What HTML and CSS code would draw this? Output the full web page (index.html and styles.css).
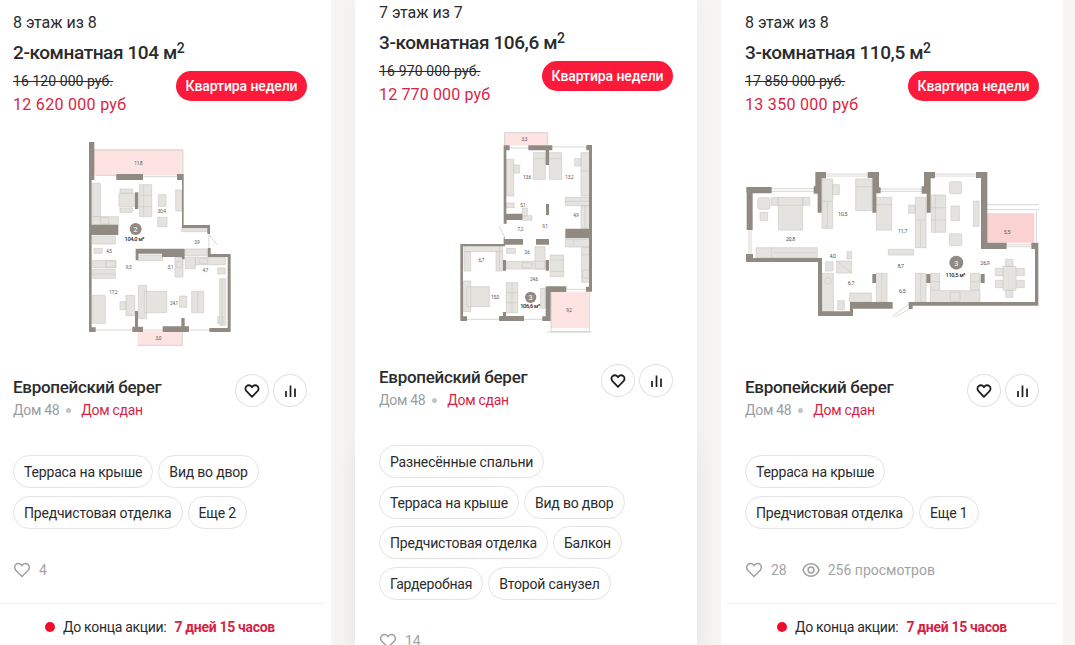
FILE: index.html
```html
<!DOCTYPE html>
<html lang="ru">
<head>
  <meta charset="UTF-8">
  <meta name="viewport" content="width=device-width, initial-scale=1.0">
  <title>Европейский берег — квартиры недели</title>
  <link rel="stylesheet" href="styles.css">
</head>
<body>
  <svg class="sprite" width="0" height="0">
    <symbol id="heart" viewBox="0 0 18 18">
      <path d="M9 15.5 L2.8 9.2 C1.2 7.5 1.3 4.9 2.9 3.5 C4.5 2.1 7 2.2 8.3 3.8 L9 4.6 L9.7 3.8 C11 2.2 13.5 2.1 15.1 3.5 C16.7 4.9 16.8 7.5 15.2 9.2 Z"/>
    </symbol>
    <symbol id="bars" viewBox="0 0 18 18">
      <path d="M5 9v6M9.500 3.500V15M14 6.500V15"/>
    </symbol>
    <symbol id="eye" viewBox="0 0 18 18">
      <path d="M1 9C2.5 4.800 5.500 2.800 9 2.800S15.500 4.800 17 9C15.500 13.200 12.500 15.200 9 15.200S2.500 13.200 1 9Z"/>
      <circle cx="9" cy="9" r="2.900"/>
    </symbol>
  </svg>

  <div class="cards">
    <!-- 104 м² -->
    <div class="card">
      <div class="floor">8 этаж из 8</div>
      <div class="title">2-комнатная 104 м<sup>2</sup></div>
      <div class="price-row">
        <div class="prices">
          <div class="price-old">16 120 000 руб.</div>
          <div class="price">12 620 000 руб</div>
        </div>
        <span class="badge">Квартира недели</span>
      </div>
      <svg class="plan" viewBox="-186 9 882 648">
        <g class="balcony">
          <path d="M57 58h266v78H57zM188 604h134v42H188z"/>
        </g>
        <g class="furn">
          <path d="M53 160h23v100H53zM53 260h77v25H53zM76 262h25v20H76zM135 177h38v13h-38zM132 190h46v40h-46zM135 234h38v13h-38zM194 164h36v96h-36zM206 164v96M194 196h36M194 230h36M250 194h23v35h-23zM248 262h28v28h-28zM302 180h18v63h-18zM320 296h78v9h-78zM330 357h66v20h-66z"/>
          <path d="M53 318h68v24H53zM57 355h25v15H57zM53 391h70v22H53zM92 393h28v18H92zM53 418h68v27H53zM53 432h68M53 496h38v84H53zM153 496h26v61h-26zM135 515h18v24h-18zM190 466h25v100h-25zM208 484h67v64h-67zM190 375h73v17h-73zM300 382h24v59h-24zM303 394h18v18h-18z"/>
          <path d="M331 382h30v34h-30zM361 382h90v22h-90zM374 385h24v16h-24zM350 484h36v64h-36zM368 484v64M313 498h22v34h-22zM428 414h23v18h-23zM434 446h18v140h-18zM441 446v140M428 560h16v20h-16z"/>
        </g>
        <path class="win" d="M56 60h268v75M62 136h70M204 140h108M50 600h130M204 600h60M338 600h70M402 314v44M402 314l25 31M188 646h134v-42"/>
        <g class="wall">
          <path d="M42 36h16v114h-8v442h12v14H42zM124 132h80v18h-80zM306 132h20v153h79v27h-8v-18h-76V150h-15zM50 284h80v31H50zM180 187h10v50h-10z"/>
          <path d="M182 356h147v32h-8v-7h-60v-10h-71v20h-8zM398 354h9v18h60v234h-64v-12h55V381h-60zM172 606v-16h8v-47h9v47h15v16zM263 589h56v-25h10v25h13v17h-79z"/>
          <circle cx="182" cy="297" r="18"/>
        </g>
        <g class="dims">
          <text x="190" y="104">11,8</text><text x="260" y="250">30,4</text><text x="366" y="342">3,9</text>
          <text x="102" y="369">4,5</text><text x="161" y="417">9,3</text><text x="286" y="417">3,1</text>
          <text x="391" y="427">4,7</text><text x="115" y="493">17,2</text><text x="297" y="524">24,1</text><text x="250" y="630">3,0</text>
        </g>
        <text class="rooms" x="182" y="305">2</text>
        <text class="area" x="178" y="334">104,0 м²</text>
      </svg>
      <div class="house">
        <div class="house-info">
          <div class="house-name">Европейский берег</div>
          <div class="house-meta">Дом 48<i class="dot"></i><span class="red">Дом сдан</span></div>
        </div>
        <button class="round"><svg class="icon small"><use href="#heart"/></svg></button>
        <button class="round"><svg class="icon"><use href="#bars"/></svg></button>
      </div>
      <div class="tags">
        <span class="tag">Терраса на крыше</span>
        <span class="tag">Вид во двор</span>
        <span class="tag">Предчистовая отделка</span>
        <span class="tag">Еще 2</span>
      </div>
      <div class="stats">
        <svg class="icon"><use href="#heart"/></svg><span>4</span>
      </div>
      <div class="timer">
        <i class="timer-dot"></i>До конца акции:<b>7 дней 15 часов</b>
      </div>
    </div>

    <!-- 106,6 м² -->
    <div class="card active">
      <div class="floor">7 этаж из 7</div>
      <div class="title">3-комнатная 106,6 м<sup>2</sup></div>
      <div class="price-row">
        <div class="prices">
          <div class="price-old">16 970 000 руб.</div>
          <div class="price">12 770 000 руб</div>
        </div>
        <span class="badge">Квартира недели</span>
      </div>
      <svg class="plan" viewBox="-198 9 882 648">
        <g class="balcony">
          <path d="M179 38h128v38H179zM318 515h113v110H318z"/>
        </g>
        <g class="furn">
          <path d="M183 118h23v110h-23zM206 135h18v24h-18zM265 98h36v80h-36zM265 116h36M313 98h37v80h-37zM313 116h37M408 98h26v130h-26zM408 153h26M389 116h19v22h-19zM361 232h73v25h-73zM361 244h73M408 257h26v68h-26zM420 257v68M183 249h25v14h-25zM232 265h15v23h-15zM232 287h29v14h-29z"/>
          <path d="M57 375h115v20H57zM57 395h20v58H57zM153 395h20v58h-20zM163 375v78M185 385h26v15h-26zM184 424h116v23H184zM270 380h30v67h-30zM232 428h28v16h-28zM316 405h40v65h-40zM316 420h40M316 454h40M361 358h73v23h-73zM386 358v23M410 381h24v106h-24zM410 404h24M413 450h20v24h-20z"/>
          <path d="M55 483h22v92H55zM65 500h68v60H65zM184 488h34v90h-34zM201 488v90M184 518h34M184 548h34M286 505h15v60h-15z"/>
        </g>
        <path class="win" d="M179 76V38h129v38M190 84h62M322 81h105M162 319l18 34M66 598h100M237 598h60M364 508h60M318 515v120h115v-124M306 636h134"/>
        <g class="wall">
          <path d="M176 76h18v15h-10v190h48v19h-47v11h-9zM250 76h72v15h-10v44h-10V91h-52zM424 75h17v440h-18v-15h9V355h-71v-29h71V91h-8zM303 252h9v33h-9zM176 352h3v5h55v17h-58zM273 357h39v17h-39zM174 420h9v32h-9zM302 420h10v32h-10z"/>
          <path d="M46 372h134v7H54v210h12v14H46zM162 588h12v-12h9v12h54v15h-75zM302 499h62v17h-47v87h-25v-14h10z"/>
          <circle cx="257" cy="532" r="17"/>
        </g>
        <g class="dims">
          <text x="238" y="63">3,3</text><text x="246" y="178">13,6</text><text x="373" y="178">13,2</text><text x="234" y="262">5,1</text>
          <text x="393" y="290">4,9</text><text x="226" y="334">7,2</text><text x="300" y="323">9,1</text><text x="246" y="402">3,6</text>
          <text x="109" y="425">6,7</text><text x="267" y="483">24,6</text><text x="150" y="536">15,0</text><text x="372" y="576">9,2</text>
        </g>
        <text class="rooms" x="257" y="540">3</text>
        <text class="area" x="255" y="564">106,6 м²</text>
      </svg>
      <div class="house">
        <div class="house-info">
          <div class="house-name">Европейский берег</div>
          <div class="house-meta">Дом 48<i class="dot"></i><span class="red">Дом сдан</span></div>
        </div>
        <button class="round"><svg class="icon small"><use href="#heart"/></svg></button>
        <button class="round"><svg class="icon"><use href="#bars"/></svg></button>
      </div>
      <div class="tags">
        <span class="tag">Разнесённые спальни</span>
        <span class="tag">Терраса на крыше</span>
        <span class="tag">Вид во двор</span>
        <span class="tag">Предчистовая отделка</span>
        <span class="tag">Балкон</span>
        <span class="tag">Гардеробная</span>
        <span class="tag">Второй санузел</span>
      </div>
      <div class="stats">
        <svg class="icon"><use href="#heart"/></svg><span>14</span>
      </div>
    </div>

    <!-- 110,5 м² -->
    <div class="card">
      <div class="floor">8 этаж из 8</div>
      <div class="title">3-комнатная 110,5 м<sup>2</sup></div>
      <div class="price-row">
        <div class="prices">
          <div class="price-old">17 850 000 руб.</div>
          <div class="price">13 350 000 руб</div>
        </div>
        <span class="badge">Квартира недели</span>
      </div>
      <svg class="plan" viewBox="30 -81 882 648">
        <path class="balcony deep" d="M756 160h142v88H756z"/>
        <g class="furn">
          <rect x="68" y="113" width="37" height="35" rx="6"/>
          <path d="M109 113h20v23h-20zM204 112h20v24h-20zM130 112h73v98h-73zM130 136h73M75 157h23v25H75zM63 263h184v30H63zM110 263v30M118 278h128M261 57h32v148h-32zM261 124h32M277 124v80M293 74h20v30h-20zM362 57h48v95h-48zM362 80h48"/>
          <path d="M424 112h46v98h-46zM424 134h46M305 303h45v36h-45zM305 303l45 36M272 305h22v28h-22zM336 275h14v22h-14zM261 340h34v115h-34zM308 422h20v27h-20zM344 399h65v27h-65zM424 340h32v86h-32zM440 340v86"/>
          <circle cx="279" cy="363" r="10"/>
          <path d="M460 268h76v17h-76zM541 112h32v151h-32zM541 180h32M557 184v76M521 135h20v25h-20zM541 340h32v86h-32zM557 340v86M589 105h43v112h-43zM601 105v112M589 143h43M589 180h43M648 138h25v44h-25zM715 123h17v76h-17z"/>
          <rect x="643" y="65" width="37" height="36" rx="5"/>
          <rect x="643" y="221" width="37" height="36" rx="5"/>
          <path d="M586 340h28v50h-28zM586 365h28M706 340h28v50h-28zM706 365h28M586 392h149v36H586zM646 396h29v28h-29zM804 319h39v72h-39zM812 298h22v21h-22zM812 391h22v21h-22zM781 325h22v22h-22zM781 361h22v22h-22zM845 325h23v22h-23zM845 361h23v22h-23z"/>
        </g>
        <path class="win" d="M108 86h132M108 94h132M42 210v72M48 210v72M272 42h126M272 48h126M434 87h128M434 94h128M597 42h126M597 48h126M756 134h156M756 149h156M904 155v92M814 254h76M814 260h76M527 428l-47 36-8 6M480 472l50-29"/>
        <g class="wall">
          <path d="M34 81h76v19H53v110H35V98h-1zM33 282h21v12h207v160h84v-28h128v20H354v22H249V306H33zM236 79h5V36h32v19h-13v103h-12v-57h-12zM398 36h34v46h5v18h-13v58h-12V54h-14zM412 342h11v27h-11z"/>
          <path d="M560 79h7V36h33v19h-13v103h-12v-57h-15zM723 36h34v212h58v19h-77V54h-15zM889 248h21v189H533v10h-12v-21h379V267h-11zM574 342h12v27h-12zM737 342h12v27h-12z"/>
          <circle cx="664" cy="308" r="21"/>
        </g>
        <g class="dims big">
          <text x="166" y="244">20,8</text><text x="323" y="167">10,5</text><text x="293" y="293">4,0</text><text x="348" y="375">6,7</text>
          <text x="503" y="220">11,7</text><text x="497" y="325">8,7</text><text x="502" y="398">6,5</text><text x="750" y="314">26,9</text><text x="816" y="221">5,5</text>
        </g>
        <text class="rooms" x="664" y="317">3</text>
        <text class="area" x="661" y="350">110,5 м²</text>
      </svg>
      <div class="house">
        <div class="house-info">
          <div class="house-name">Европейский берег</div>
          <div class="house-meta">Дом 48<i class="dot"></i><span class="red">Дом сдан</span></div>
        </div>
        <button class="round"><svg class="icon small"><use href="#heart"/></svg></button>
        <button class="round"><svg class="icon"><use href="#bars"/></svg></button>
      </div>
      <div class="tags">
        <span class="tag">Терраса на крыше</span>
        <span class="tag">Предчистовая отделка</span>
        <span class="tag">Еще 1</span>
      </div>
      <div class="stats">
        <svg class="icon"><use href="#heart"/></svg><span>28</span>
        <svg class="icon eye"><use href="#eye"/></svg><span>256 просмотров</span>
      </div>
      <div class="timer">
        <i class="timer-dot"></i>До конца акции:<b>7 дней 15 часов</b>
      </div>
    </div>
  </div>
</body>
</html>
```
FILE: styles.css
```css
* {
  box-sizing: border-box;
}
body {
  margin: 0;
  height: 645px;
  overflow: hidden;
  background: #f6f5f4;
  color: #2b2b2d;
  font-family: Roboto, "Liberation Sans", sans-serif;
  font-size: 15px;
}
.sprite {
  display: block;
}
.cards {
  display: grid;
  grid-template-columns: repeat(3, 342px);
  gap: 24px;
  height: 645px;
  margin-left: -11px;
  overflow: hidden;
}
.card {
  z-index: 1;
  padding: 12px 24px 0;
  background: #fff;
}
.card.active {
  z-index: 0;
  padding-top: 2px;
  box-shadow: 0 0 20px rgba(60, 50, 40, 0.05), 0 450px 24px rgba(60, 60, 60, 0.06);
}
.floor {
  height: 28px;
  font-size: 16px;
  line-height: 22px;
}
.title {
  height: 30px;
  font-size: 19px;
  font-weight: 500;
  line-height: 25px;
  letter-spacing: -0.4px;
  white-space: nowrap;
}
.title sup {
  font-size: 14px;
  line-height: 0;
  vertical-align: 6px;
}
.price-row {
  display: flex;
  justify-content: space-between;
  height: 63px;
}
.price-old {
  font-size: 14px;
  line-height: 23px;
  letter-spacing: 0.06px;
  text-decoration: line-through;
}
.price {
  color: #d81f45;
  font-size: 16px;
  line-height: 23px;
  letter-spacing: 0.3px;
}
.active .price,
.active .price-old {
  letter-spacing: 0.15px;
}
.badge {
  width: 131px;
  height: 30px;
  margin-top: 1px;
  border-radius: 15px;
  background: #fb1a39;
  color: #fff;
  font-size: 14px;
  font-weight: 500;
  line-height: 30px;
  letter-spacing: -0.1px;
  text-align: center;
}
.plan {
  display: block;
  width: 294px;
  height: 216px;
}
.wall {
  fill: #918a82;
}
.furn {
  fill: #e5e3e0;
  stroke: #cdcac6;
  stroke-width: 2;
}
.win {
  fill: none;
  stroke: #c6c3bf;
  stroke-width: 2;
}
.balcony {
  fill: #fde3e2;
}
.balcony.deep {
  fill: #fbd2d2;
}
.dims {
  fill: #555;
  font-size: 14px;
  letter-spacing: -0.5px;
  text-anchor: middle;
}
.dims.big {
  font-size: 16px;
}
.rooms {
  fill: #fff;
  font-size: 22px;
  text-anchor: middle;
}
.area {
  fill: #222;
  font-size: 17px;
  font-weight: 500;
  letter-spacing: -0.8px;
  text-anchor: middle;
}
.house {
  display: flex;
  gap: 4px;
  height: 81px;
  margin-top: 25px;
}
.house-info {
  flex: 1;
}
.house-name {
  font-size: 17px;
  font-weight: 500;
  line-height: 26px;
  letter-spacing: -0.3px;
}
.house-meta {
  display: flex;
  align-items: center;
  color: #9a9da1;
  font-size: 14px;
  line-height: 21px;
  letter-spacing: -0.3px;
}
.dot {
  width: 5px;
  height: 5px;
  margin: 0 10px 0 7px;
  border-radius: 50%;
  background: #c3c5c8;
}
.red {
  color: #d81f45;
}
.round {
  display: flex;
  align-items: center;
  justify-content: center;
  width: 34px;
  height: 33px;
  padding: 0;
  border: 1px solid #e0e0e2;
  border-radius: 50%;
  background: #fff;
}
.icon {
  width: 18px;
  height: 18px;
  fill: none;
  stroke: #1e1e20;
  stroke-width: 1.7;
}
.icon.small {
  width: 16px;
  height: 16px;
  stroke-width: 2;
}
.tags {
  display: flex;
  flex-wrap: wrap;
  gap: 7.6px 5px;
}
.tag {
  height: 33px;
  padding: 0 10px;
  border: 1px solid #e3e3e5;
  border-radius: 17px;
  font-size: 14px;
  line-height: 32px;
  letter-spacing: -0.17px;
  white-space: nowrap;
}
/* узкие подписи */
.tag:nth-child(even) {
  letter-spacing: -0.2px;
}
.stats {
  display: flex;
  align-items: center;
  height: 20px;
  margin-top: 31px;
  color: #a3a3a5;
  font-size: 14px;
}
.stats .icon {
  margin-right: 8px;
  stroke: #a0a0a2;
  stroke-width: 1.5;
}
.stats .icon.eye {
  margin-left: 15px;
}
.timer {
  display: flex;
  align-items: center;
  justify-content: center;
  height: 48px;
  margin: 23px -18px 0;
  border-top: 1px solid #f3f3f3;
  font-size: 14px;
  letter-spacing: -0.3px;
}
.timer-dot {
  width: 10px;
  height: 10px;
  margin-right: 8px;
  border-radius: 50%;
  background: #f00d2c;
}
.timer b {
  margin-left: 8px;
  color: #d81f45;
  font-weight: 700;
}
```
